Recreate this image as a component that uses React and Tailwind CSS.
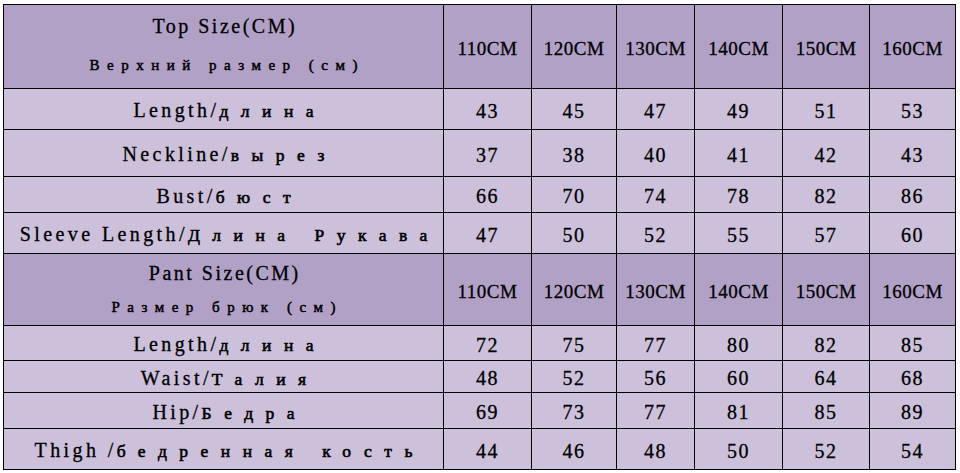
import React from 'react';

const sizes = ['110CM', '120CM', '130CM', '140CM', '150CM', '160CM'];

const topRows = [
  { en: 'Length/', ru: 'длина', values: [43, 45, 47, 49, 51, 53], h: 'h-[41px]' },
  { en: 'Neckline/', ru: 'вырез', values: [37, 38, 40, 41, 42, 43], h: 'h-[47px]' },
  { en: 'Bust/', ru: 'бюст', values: [66, 70, 74, 78, 82, 86], h: 'h-[36px]' },
  { en: 'Sleeve Length/', ru: 'Длина Рукава', values: [47, 50, 52, 55, 57, 60], h: 'h-[41px]' }
];

const pantRows = [
  { en: 'Length/', ru: 'длина', values: [72, 75, 77, 80, 82, 85], h: 'h-[35px]' },
  { en: 'Waist/', ru: 'Талия', values: [48, 52, 56, 60, 64, 68], h: 'h-[32px]' },
  { en: 'Hip/', ru: 'Бедра', values: [69, 73, 77, 81, 85, 89], h: 'h-[36px]' },
  { en: 'Thigh /', ru: 'бедренная кость', values: [44, 46, 48, 50, 52, 54], h: 'h-[41px]' }
];

const HeaderRow = ({ title, subtitle, h, gap, shift }) => (
  <tr className={`${h} bg-[#b2a1c7]`}>
    <td className="border border-black p-0">
      <div className={`flex flex-col items-center ${shift} ${gap}`}>
        <span className="text-[20px] leading-none tracking-[2.5px] mr-[-2.5px]">{title}</span>
        <span className="text-[15px] leading-none tracking-[7.5px] mr-[-7.5px] [-webkit-text-stroke:0.5px_black]">
          {subtitle}
        </span>
      </div>
    </td>
    {sizes.map(s => (
      <td
        key={s}
        className="border border-black p-0 pt-[3px] text-center text-[19px] leading-none tracking-[0.5px]"
      >
        {s}
      </td>
    ))}
  </tr>
);

const DataRow = ({ row }) => (
  <tr className={`${row.h} bg-[#ccc0da]`}>
    <td className="border border-black p-0 pt-[3px] text-center leading-none whitespace-nowrap">
      <span className="text-[20px] tracking-[3.4px]">{row.en}</span>
      <span className="text-[17.5px] tracking-[12.5px] mr-[-12.5px] [-webkit-text-stroke:0.6px_black]">
        {row.ru}
      </span>
    </td>
    {row.values.map((v, i) => (
      <td
        key={i}
        className="border border-black p-0 pt-[3px] text-center text-[20px] leading-none tracking-[1.5px]"
      >
        {v}
      </td>
    ))}
  </tr>
);

const App = () => {
  return (
    <div className="w-[960px] h-[473px] bg-white pt-[4px] pl-[3px] font-['Liberation_Serif',serif] text-black [-webkit-text-stroke:0.3px_black] overflow-hidden">
      <table className="table-fixed border-collapse w-[952px]">
        <colgroup>
          <col className="w-[440px]" />
          <col className="w-[88px]" />
          <col className="w-[85px]" />
          <col className="w-[78px]" />
          <col className="w-[88px]" />
          <col className="w-[87px]" />
          <col className="w-[86px]" />
        </colgroup>
        <tbody>
          <HeaderRow
            title="Top Size(CM)"
            subtitle="Верхний размер (см)"
            h="h-[84px]"
            gap="gap-[22px]"
            shift="pb-[4px]"
          />
          {topRows.map((row, i) => (
            <DataRow key={'t' + i} row={row} />
          ))}
          <HeaderRow
            title="Pant Size(CM)"
            subtitle="Размер брюк (см)"
            h="h-[72px]"
            gap="gap-[17px]"
            shift="pb-[1px]"
          />
          {pantRows.map((row, i) => (
            <DataRow key={'p' + i} row={row} />
          ))}
        </tbody>
      </table>
    </div>
  );
};

export default App;
